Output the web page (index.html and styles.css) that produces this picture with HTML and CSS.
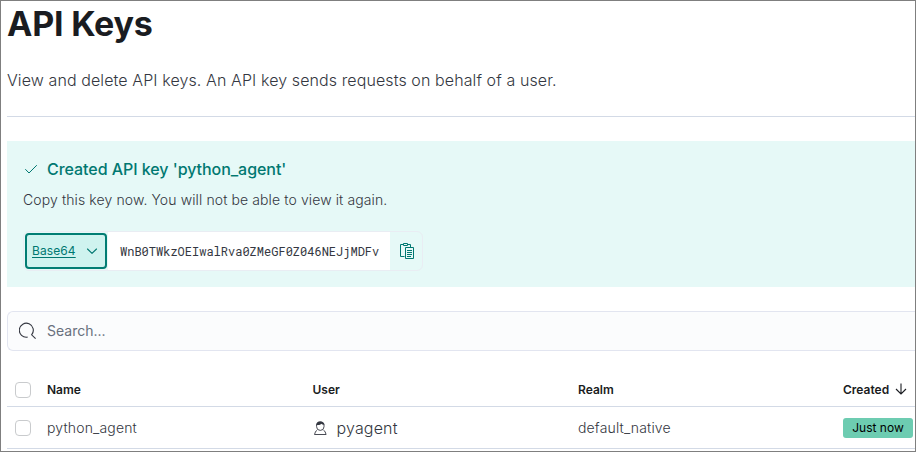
FILE: index.html
```html
<!DOCTYPE html>
<html lang="en">
<head>
<meta charset="utf-8">
<title>API Keys</title>
<link rel="stylesheet" href="styles.css">
</head>
<body>
<main class="page">
  <header class="page-header">
    <h1 class="title">API Keys</h1>
    <p class="description">View and delete API keys. An API key sends requests on behalf of a user.</p>
  </header>

  <section class="callout">
    <h2 class="callout-title">
      <svg class="icon" width="16" height="16" viewBox="0 0 16 16"><path d="M2.3 8.2 6 12 13.8 4.2" fill="none" stroke="currentColor"/></svg>
      <span>Created API key 'python_agent'</span>
    </h2>
    <p class="callout-text">Copy this key now. You will not be able to view it again.</p>
    <div class="key-control">
      <button class="format" type="button">
        <span class="format-label">Base64</span>
        <svg class="icon" width="16" height="16" viewBox="0 0 16 16"><path d="M3.5 6 8 10.3 12.5 6" fill="none" stroke="currentColor" stroke-width="1.1" stroke-linecap="round" stroke-linejoin="round"/></svg>
      </button>
      <code class="key-value">WnB0TWkzOEIwalRva0ZMeGF0Z046NEJjMDFv</code>
      <button class="copy" type="button" aria-label="Copy">
        <svg class="icon" width="16" height="16" viewBox="0 0 16 16" fill="none" stroke="currentColor"><path d="M4 1.5H1.5v12h4M9 1.5h2.500v3M4.500.5h4v2h-4zM6.500 4.500h8v11h-8zM8 7.500h5M8 9.500h5M8 11.500h5M8 13.500h4"/></svg>
      </button>
    </div>
  </section>

  <div class="search">
    <svg class="icon" width="18" height="18" viewBox="0 0 18 18" fill="none" stroke="currentColor" stroke-width="1.1"><path d="M8.6 15.1A7 7 0 1 1 12.6 12.8L16.6 16.7"/></svg>
    <span class="search-label">Search...</span>
  </div>

  <div class="table">
    <div class="row head">
      <span class="checkbox"></span>
      <span>Name</span>
      <span>User</span>
      <span>Realm</span>
      <span class="sorted">Created
        <svg class="icon" width="12" height="12" viewBox="0 0 12 12"><path d="M6 .5v10M1 6l5 5 5-5" fill="none" stroke="currentColor" stroke-width="1.1"/></svg>
      </span>
    </div>
    <div class="row">
      <span class="checkbox"></span>
      <span>python_agent</span>
      <span class="user">
        <svg class="icon" width="14" height="16" viewBox="0 0 14 16"><path d="M3.6 4.5v2.2a3.7 3.7 0 0 0 7.4 0V4.5M4 10.500 2.600 11.400 1.500 14.500h11.600l-1.100-3.100-1.400-.9" fill="none" stroke="currentColor" stroke-width=".9"/><path d="M3.1 5.2C3 0 11.300 0 11.500 5 9.800 5 9 4.400 8.500 3.800 7.300 5 5.500 5.200 3.100 5.200z" fill="currentColor"/></svg>
        <span>pyagent</span>
      </span>
      <span>default_native</span>
      <span class="badge">Just now</span>
    </div>
  </div>
</main>
</body>
</html>
```
FILE: styles.css
```css
* { box-sizing: border-box; }

body {
  margin: 0;
  background: #fff;
  color: #343741;
  font-family: Inter, "Liberation Sans", sans-serif;
}

h1, h2, p { margin: 0; }
.icon { display: block; flex: none; }

.page {
  height: 452px;
  border: 1px solid #7f7f7f;
  padding-left: 6px;
  overflow: hidden;
}

.page-header {
  height: 116px;
  border-bottom: 1px solid #d3dae6;
}

.title {
  padding-top: 3px;
  font-size: 34px;
  line-height: 40px;
  font-weight: 700;
  letter-spacing: -0.2px;
  color: #1a1c21;
}

.description {
  margin-top: 24px;
  font-size: 16px;
  line-height: 24px;
  font-weight: 300;
  letter-spacing: 0.1px;
}

.callout {
  height: 146px;
  margin-top: 24px;
  padding: 16px;
  background: #e6f9f7;
}

.callout-title {
  display: flex;
  align-items: center;
  gap: 8px;
  height: 24px;
  font-size: 16px;
  font-weight: 450;
  letter-spacing: -0.05px;
  color: #007871;
}

.callout-text {
  margin-top: 8px;
  font-size: 14px;
  line-height: 21px;
  font-weight: 350;
  letter-spacing: 0.11px;
}

.key-control {
  display: flex;
  width: 400px;
  height: 40px;
  margin-top: 21px;
  border: 1px solid #e9edf3;
  border-radius: 6px;
}

button {
  border: 0;
  padding: 0;
  font: inherit;
  color: #007871;
}

.format {
  display: flex;
  align-items: center;
  justify-content: space-between;
  width: 82px;
  height: 36px;
  margin: 1px;
  padding: 0 5px;
  border: 2px solid #017d73;
  border-radius: 4px;
  background: #cff3ef;
  font-size: 12px;
}

.format-label {
  padding-bottom: 1px;
  letter-spacing: 0.1px;
  text-decoration: underline;
  text-underline-offset: 2px;
}

.key-value {
  width: 282px;
  padding-left: 12px;
  background: #fff;
  font: 12px/38px "Roboto Mono", "DejaVu Sans Mono", monospace;
}

.copy {
  display: grid;
  place-items: center;
  flex: 1;
  padding-left: 2px;
  background: transparent;
}

.search {
  display: flex;
  align-items: center;
  gap: 10px;
  height: 40px;
  margin-top: 24px;
  padding-left: 11px;
  border: 1px solid #e2e5f0;
  border-right: 0;
  border-radius: 6px 0 0 6px;
  background: #fbfcfd;
  font-size: 14px;
  color: #69707d;
}

.search .icon { color: #343741; }
.search-label { padding-bottom: 1px; }

.table { margin-top: 23px; }

.row {
  display: grid;
  grid-template-columns: 32px 265.5px 265.5px 265px 70px;
  align-items: center;
  height: 42px;
  padding-left: 8px;
  border-bottom: 1px solid #d3dae6;
  font-size: 14px;
  font-weight: 350;
  letter-spacing: 0.16px;
}

.head {
  height: 33px;
  font-size: 12px;
  font-weight: 600;
  letter-spacing: 0;
  color: #1a1c21;
}

.head > span:not(.checkbox) { padding-bottom: 2px; }

.checkbox {
  width: 16px;
  height: 16px;
  border: 1px solid #c9cbcd;
  border-radius: 4px;
  background: #fff;
}

.sorted {
  display: flex;
  align-items: center;
  gap: 6px;
}

.user {
  display: flex;
  align-items: center;
  gap: 10px;
  font-size: 16px;
}

.badge {
  height: 20px;
  border-radius: 3px;
  background: #6dccb1;
  color: #000;
  font-size: 12px;
  font-weight: 400;
  letter-spacing: 0;
  line-height: 20px;
  text-align: center;
}
```
